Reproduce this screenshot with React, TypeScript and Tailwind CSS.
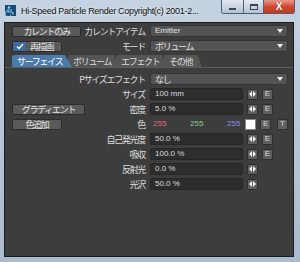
import React from 'react';

const jp = "font-['Noto_Sans_CJK_JP',sans-serif] text-[9px] leading-[11px] tracking-[-1.3px] whitespace-nowrap";
const lat = "font-['Liberation_Sans',sans-serif] text-[8px] leading-[10px] whitespace-nowrap";

function Arrows() {
  return (
    <svg width="7" height="6" viewBox="0 0 7 6">
      <polygon points="0,3 3,0 3,6" fill="#f2f2f2" />
      <polygon points="7,3 4,0 4,6" fill="#f2f2f2" />
    </svg>
  );
}

function SmallBtn({ children }: { children?: React.ReactNode }) {
  return (
    <div className={`flex h-[11px] w-[11px] items-center justify-center rounded-[1px] border border-[#2f2f2f] bg-[#5e5e5e] text-[#d8d8d8] ${lat}`}>
      {children}
    </div>
  );
}

function Dropdown({ text, latin }: { text: string; latin?: boolean }) {
  return (
    <div className="flex h-[12px] w-[138px] items-center rounded-[2px] border border-[#343434] bg-[#545454] pl-[4px] pr-[4px]">
      <span className={`${latin ? lat : jp} text-[#e2e2e2]`}>{text}</span>
      <svg className="ml-auto" width="6" height="4" viewBox="0 0 6 4">
        <polygon points="0,0 6,0 3,4" fill="#f0f0f0" />
      </svg>
    </div>
  );
}

function Field({ value }: { value: string }) {
  return (
    <div className={`flex h-[12px] w-[93px] items-center rounded-[2px] border border-[#262626] bg-[#2d2d2d] pl-[4px] text-[#dcdcdc] ${lat}`}>
      {value}
    </div>
  );
}

function Btn({ text, w }: { text: string; w: string }) {
  return (
    <div className={`flex h-[11px] ${w} items-center justify-center rounded-[2px] border border-[#2c2c2c] bg-[#5a5a5a] text-[#e4e4e4] ${jp}`}>
      {text}
    </div>
  );
}

function Row({ left, label, children }: { left?: React.ReactNode; label: string; children: React.ReactNode }) {
  return (
    <div className="flex h-[12px] items-center">
      <div className="flex w-[140px] items-center pl-[7px]">
        {left}
        <span className={`ml-auto text-[#dedede] ${jp}`}>{label}</span>
      </div>
      <div className="ml-[5px] flex w-[138px] items-center gap-[4px]">{children}</div>
    </div>
  );
}

function Tab({ text, active, w, first }: { text: string; active?: boolean; w: string; first?: boolean }) {
  return (
    <div
      className={`flex h-[12px] ${w} items-center pl-[5px] ${first ? '' : '-ml-[4px]'} rounded-tl-[2px] [clip-path:polygon(0_0,88%_0,100%_100%,0_100%)] ${
        active ? 'z-10 bg-[#4b7bab] text-white' : 'bg-[#555555] text-[#dcdcdc]'
      } ${jp}`}
    >
      {text}
    </div>
  );
}

export default function App() {
  return (
    <div className="flex h-[262px] w-[300px] flex-col bg-gradient-to-b from-[#c4d2e1] to-[#a9bacc]">
      {/* Title bar */}
      <div className="flex h-[22px] items-start">
        <div className="ml-[5px] mt-[5px] flex h-[11px] w-[11px] shrink-0 items-center justify-center bg-[#1b4a78]">
          <svg width="11" height="11" viewBox="0 0 11 11">
            <circle cx="4" cy="2.5" r="1.2" fill="#7fd6f0" />
            <path d="M3 4 L3 7 L7 7 L8.5 9.5 M4.5 5 L7 5" stroke="#7fd6f0" strokeWidth="1.2" fill="none" />
            <path d="M2 6 A3 3 0 1 0 6 9.5" stroke="#7fd6f0" strokeWidth="1" fill="none" />
          </svg>
        </div>
        <span className="ml-[5px] mt-[5px] whitespace-nowrap font-['Liberation_Sans',sans-serif] text-[9px] leading-[12px] tracking-[-0.3px] text-[#111] [text-shadow:0_0_4px_#ffffff]">
          Hi-Speed Particle Render Copyright(c) 2001-2...
        </span>
        <div className="ml-auto mr-[5px] flex h-[14px] shrink-0 overflow-hidden rounded-b-[3px] border border-t-0 border-[#4f5e70]">
          <div className="flex w-[22px] items-center justify-center border-r border-[#4f5e70] bg-gradient-to-b from-[#e3e9f1] to-[#b4c3d4]">
            <div className="mt-[4px] h-[2px] w-[7px] border border-[#3a4654] bg-white" />
          </div>
          <div className="flex w-[20px] items-center justify-center border-r border-[#4f5e70] bg-gradient-to-b from-[#e3e9f1] to-[#b4c3d4]">
            <div className="h-[6px] w-[8px] border-[1.5px] border-t-[2.5px] border-[#3a4654] bg-transparent" />
          </div>
          <div className="flex w-[30px] items-center justify-center bg-gradient-to-b from-[#e69a8c] via-[#cf4a33] to-[#c0391f] font-['Liberation_Sans',sans-serif] text-[10px] font-bold leading-none text-white [text-shadow:0_0_1px_#5a1a10]">
            X
          </div>
        </div>
      </div>

      {/* Client */}
      <div className="mb-[5px] ml-[4px] mr-[6px] flex flex-1 flex-col border border-[#1c1c1c] bg-[#3d3d3d]">
        <div className="mt-[2px] flex flex-col gap-[3px]">
          <Row left={<Btn text="カレントのみ" w="w-[69px]" />} label="カレントアイテム">
            <Dropdown text="Emitter" latin />
          </Row>
          <Row
            left={
              <div className="flex h-[11px] w-[50px] items-center overflow-hidden rounded-[2px] border border-[#2c2c2c] bg-[#5a5a5a]">
                <div className="flex h-full w-[13px] items-center justify-center bg-[#3e6c9c]">
                  <svg width="8" height="7" viewBox="0 0 8 7">
                    <polyline points="1,3.5 3,5.5 7,1" stroke="#ffffff" strokeWidth="1.4" fill="none" />
                  </svg>
                </div>
                <span className="ml-[4px] whitespace-nowrap font-['Noto_Sans_CJK_JP',sans-serif] text-[9px] leading-[9px] tracking-[-1.3px] text-[#e4e4e4]">
                  再描画
                </span>
              </div>
            }
            label="モード"
          >
            <Dropdown text="ボリューム" />
          </Row>
        </div>

        {/* Tabs */}
        <div className="mt-[3px] flex pl-[7px]">
          <Tab text="サーフェイス" active w="w-[60px]" first />
          <Tab text="ボリューム" w="w-[52px]" />
          <Tab text="エフェクト" w="w-[52px]" />
          <Tab text="その他" w="w-[38px]" />
        </div>
        <div className="h-[1px] bg-[#5c5c5c]" />

        <div className="mt-[5px] flex flex-col gap-[3px]">
          <Row label="Pサイズエフェクト">
            <Dropdown text="なし" />
          </Row>
          <Row label="サイズ">
            <Field value="100 mm" />
            <SmallBtn><Arrows /></SmallBtn>
            <SmallBtn>E</SmallBtn>
          </Row>
          <Row left={<Btn text="グラディエント" w="w-[73px]" />} label="密度">
            <Field value="5.0 %" />
            <SmallBtn><Arrows /></SmallBtn>
            <SmallBtn>E</SmallBtn>
          </Row>
          <Row left={<Btn text="色追加" w="w-[50px]" />} label="色">
            <div className={`flex w-[93px] items-center pl-[3px] ${lat}`}>
              <span className="w-[37px] text-[#e0707a]">255</span>
              <span className="w-[37px] text-[#84d484]">255</span>
              <span className="text-[#8c8ce8]">255</span>
            </div>
            <div className="h-[11px] w-[11px] border border-[#888] bg-white" />
            <SmallBtn>E</SmallBtn>
            <div className="ml-[2px]">
              <SmallBtn>T</SmallBtn>
            </div>
          </Row>
          <Row label="自己発光度">
            <Field value="50.0 %" />
            <SmallBtn><Arrows /></SmallBtn>
            <SmallBtn>E</SmallBtn>
          </Row>
          <Row label="吸収">
            <Field value="100.0 %" />
            <SmallBtn><Arrows /></SmallBtn>
            <SmallBtn>E</SmallBtn>
          </Row>
          <Row label="反射光">
            <Field value="0.0 %" />
            <SmallBtn><Arrows /></SmallBtn>
          </Row>
          <Row label="光沢">
            <Field value="50.0 %" />
            <SmallBtn><Arrows /></SmallBtn>
          </Row>
        </div>
      </div>
    </div>
  );
}
